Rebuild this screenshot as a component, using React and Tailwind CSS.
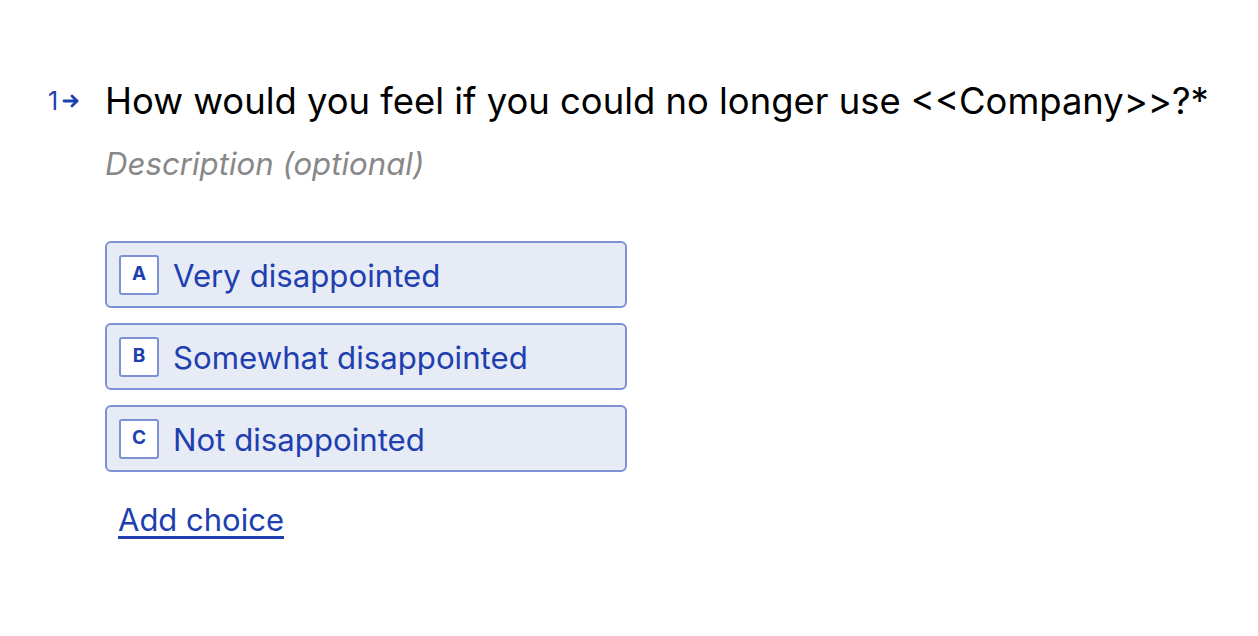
import React from 'react'

const choices = [
  { key: 'A', label: 'Very disappointed' },
  { key: 'B', label: 'Somewhat disappointed' },
  { key: 'C', label: 'Not disappointed' },
]

export default function App() {
  return (
    <div className="min-h-screen bg-white font-['Inter',sans-serif]">
      <div className="flex pt-[78px] pl-[48px]">
        {/* Numero de pregunta */}
        <div className="flex items-center h-[46px] w-[57px] text-[#1e40af] gap-[4px]">
          <span className="text-[25px] leading-none">1</span>
          <svg width="18" height="14" viewBox="0 0 18 14" fill="none" stroke="currentColor" strokeWidth="2.8" strokeLinecap="round" strokeLinejoin="round">
            <path d="M2 7h13" />
            <path d="M10 2l5 5-5 5" />
          </svg>
        </div>

        <div className="flex flex-col">
          <h1 className="text-[36.4px] leading-[46px] text-black">
            How would you feel if you could no longer use &lt;&lt;Company&gt;&gt;?*
          </h1>
          <p className="mt-[22px] text-[31.2px] leading-[36px] italic text-[#888888]">
            Description (optional)
          </p>

          <div className="mt-[59px] flex flex-col gap-[15px] w-[522px]">
            {choices.map(c => (
              <div
                key={c.key}
                className="flex items-center h-[67px] px-[12px] gap-[14px] rounded-[6px] border-2 border-[#7d92d6] bg-[#e7ebf6]"
              >
                <span className="flex items-center justify-center w-[40px] h-[40px] rounded-[3px] border-2 border-[#7d92d6] bg-white text-[#1e40af] text-[19px] font-bold">
                  {c.key}
                </span>
                <span className="pt-[4px] text-[31.2px] text-[#1e40af]">{c.label}</span>
              </div>
            ))}
          </div>

          <a href="#" className="mt-[25px] ml-[13px] text-[31px] text-[#1e40af] underline underline-offset-[5px]">
            Add choice
          </a>
        </div>
      </div>
    </div>
  )
}
